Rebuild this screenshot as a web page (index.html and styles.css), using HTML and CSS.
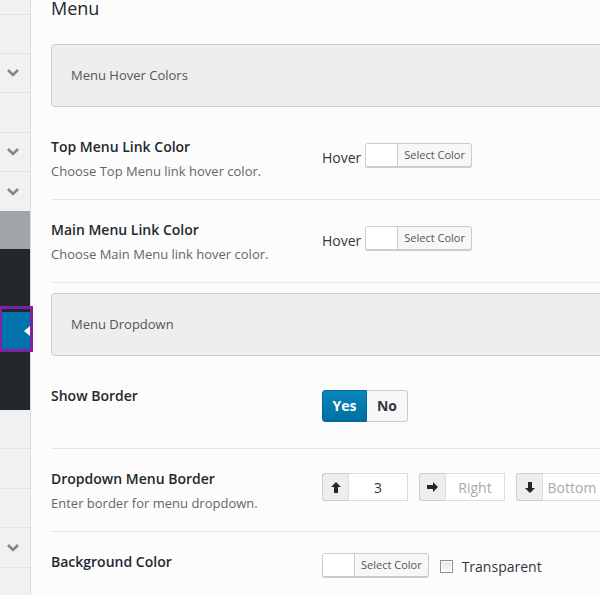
FILE: index.html
```html
<!DOCTYPE html>
<html lang="en">
<head>
  <meta charset="UTF-8" />
  <title>Theme Options - Menu</title>
  <link rel="stylesheet" href="styles.css">
</head>
<body>
  <div class="wrap">

    <!-- options sidebar (scrolled, only the edge shows) -->
    <aside class="sidebar">
      <div class="nav-item nav-first"></div>
      <div class="nav-item"></div>
      <div class="nav-item">
        <svg class="chev" width="12" height="8" viewBox="0 0 12 8"><polyline points="1,1 6,6 11,1" /></svg>
      </div>
      <div class="nav-item tall"></div>
      <div class="nav-item">
        <svg class="chev" width="12" height="8" viewBox="0 0 12 8"><polyline points="1,1 6,6 11,1" /></svg>
      </div>
      <div class="nav-item last">
        <svg class="chev" width="12" height="8" viewBox="0 0 12 8"><polyline points="1,1 6,6 11,1" /></svg>
      </div>

      <div class="nav-parent"></div>
      <div class="nav-sub">
        <div class="nav-active"><span class="nav-arrow"></span></div>
      </div>

      <div class="nav-item"></div>
      <div class="nav-item tall"></div>
      <div class="nav-item"></div>
      <div class="nav-item tall">
        <svg class="chev" width="12" height="8" viewBox="0 0 12 8"><polyline points="1,1 6,6 11,1" /></svg>
      </div>
      <div class="nav-item"></div>
    </aside>

    <!-- main panel -->
    <main class="panel">
      <h2 class="panel-title">Menu</h2>

      <div class="section-head">Menu Hover Colors</div>

      <div class="field-row">
        <div class="field-label">
          <h4>Top Menu Link Color</h4>
          <p>Choose Top Menu link hover color.</p>
        </div>
        <div class="field-control ctl-hover">
          <span class="hover-label">Hover</span>
          <span class="color-btn"><span class="swatch"></span><span class="color-text">Select Color</span></span>
        </div>
      </div>

      <div class="field-row">
        <div class="field-label">
          <h4>Main Menu Link Color</h4>
          <p>Choose Main Menu link hover color.</p>
        </div>
        <div class="field-control ctl-hover">
          <span class="hover-label">Hover</span>
          <span class="color-btn"><span class="swatch"></span><span class="color-text">Select Color</span></span>
        </div>
      </div>

      <div class="section-head">Menu Dropdown</div>

      <div class="field-row">
        <div class="field-label">
          <h4>Show Border</h4>
        </div>
        <div class="field-control">
          <div class="toggle">
            <span class="toggle-yes">Yes</span>
            <span class="toggle-no">No</span>
          </div>
        </div>
      </div>

      <div class="field-row">
        <div class="field-label">
          <h4>Dropdown Menu Border</h4>
          <p>Enter border for menu dropdown.</p>
        </div>
        <div class="field-control dims">
          <div class="dim-group">
            <span class="dim-addon">
              <svg width="10" height="11" viewBox="0 0 10 11"><path d="M5 0 L10 5 H7 V11 H3 V5 H0 Z" /></svg>
            </span>
            <input class="dim-input" type="text" value="3">
          </div>
          <div class="dim-group">
            <span class="dim-addon">
              <svg width="11" height="10" viewBox="0 0 11 10"><path d="M11 5 L6 0 V3 H0 V7 H6 V10 Z" /></svg>
            </span>
            <input class="dim-input" type="text" placeholder="Right">
          </div>
          <div class="dim-group">
            <span class="dim-addon">
              <svg width="10" height="11" viewBox="0 0 10 11"><path d="M5 11 L10 6 H7 V0 H3 V6 H0 Z" /></svg>
            </span>
            <input class="dim-input" type="text" placeholder="Bottom">
          </div>
        </div>
      </div>

      <div class="field-row">
        <div class="field-label">
          <h4>Background Color</h4>
        </div>
        <div class="field-control ctl-bg">
          <span class="color-btn"><span class="swatch"></span><span class="color-text">Select Color</span></span>
          <input class="check" type="checkbox">
          <span class="check-label">Transparent</span>
        </div>
      </div>
    </main>

  </div>
</body>
</html>
```

FILE: styles.css
```css
html,
body {
  margin: 0;
  width: 600px;
  height: 595px;
  overflow: hidden;
}

body {
  font-family: "Open Sans", "Noto Sans", Arial, sans-serif;
  background-color: #fcfcfc;
  color: #23282d;
}

.wrap {
  display: flex;
  min-height: 595px;
}


/* sidebar */
.sidebar {
  width: 30px;
  flex: none;
  background-color: #f1f1f1;
  border-right: 1px solid #dcdcdc;
  display: flex;
  flex-direction: column;
}

.nav-item {
  height: 39px;
  box-sizing: border-box;
  border-bottom: 1px solid #e2e2e2;
  display: flex;
  align-items: center;
  justify-content: center;
  flex: none;
}

.nav-item.nav-first {
  height: 15px;
}

.nav-item.tall {
  height: 40px;
}

.nav-item.last {
  border-bottom: none;
}

.chev {
  margin-left: -4px;
}

.chev polyline {
  fill: none;
  stroke: #82878c;
  stroke-width: 2.6;
}

.nav-parent {
  height: 38px;
  background-color: #a0a5aa;
  flex: none;
}

.nav-sub {
  height: 161px;
  background-color: #23282d;
  padding-top: 57px;
  box-sizing: border-box;
  flex: none;
}

.nav-active {
  position: relative;
  z-index: 2;
  width: 34px;
  height: 46px;
  margin-left: -1px;
  box-sizing: border-box;
  border: 3px solid #80239f;
  background-color: #0073aa;
  box-shadow: inset 0 3px 0 #23282d;
  display: flex;
  align-items: center;
  justify-content: flex-end;
}

.nav-arrow {
  width: 0;
  height: 0;
  margin-top: 3px;
  border-top: 5px solid transparent;
  border-bottom: 5px solid transparent;
  border-right: 6px solid #fff;
}


/* main panel */
.panel {
  flex: none;
  width: 640px;
  padding-left: 20px;
}

.panel-title {
  margin: 0 0 28px;
  font-size: 18px;
  line-height: 16px;
  font-weight: 400;
  color: #23282d;
}

.section-head {
  height: 63px;
  box-sizing: border-box;
  margin: 10px 0;
  padding: 0 19px;
  border: 1px solid #ccc;
  border-radius: 4px;
  background-color: #eee;
  font-size: 13px;
  line-height: 61px;
  color: #555;
}

.field-row {
  display: grid;
  grid-template-columns: 271px 1fr;
  align-items: start;
  height: 83px;
  box-sizing: border-box;
  border-bottom: 1px solid #e7e7e7;
  padding-top: 21px;
}

.field-label h4 {
  margin: 0;
  font-size: 14px;
  line-height: 18px;
  font-weight: 600;
  color: #23282d;
}

.field-label p {
  margin: 6px 0 0;
  font-size: 13px;
  line-height: 18px;
  color: #666;
}

.field-control {
  padding-top: 3px;
}


/* color picker */
.ctl-hover {
  display: flex;
  align-items: flex-start;
  padding-top: 5px;
}

.hover-label {
  font-size: 14px;
  line-height: 19px;
  margin: 5px 4px 0 0;
  color: #32373c;
}

.color-btn {
  display: inline-flex;
  height: 24px;
  box-sizing: border-box;
  border: 1px solid #ccc;
  border-radius: 3px;
  background-color: #f7f7f7;
  box-shadow: 0 1px 0 #ccc;
  overflow: hidden;
}

.swatch {
  width: 31px;
  background-color: #fff;
  border-right: 1px solid #ccc;
}

.color-text {
  padding: 0 6px;
  font-size: 11px;
  line-height: 22px;
  color: #555;
}


/* yes / no */
.toggle {
  display: inline-flex;
}

.toggle span {
  height: 32px;
  box-sizing: border-box;
  font-size: 14px;
  font-weight: 700;
  line-height: 30px;
  text-align: center;
}

.toggle-yes {
  width: 45px;
  color: #fff;
  background: linear-gradient(#0a86bd, #006fa2);
  border: 1px solid #006799;
  border-radius: 3px 0 0 3px;
}

.toggle-no {
  width: 41px;
  color: #32373c;
  background-color: #f7f7f7;
  border: 1px solid #ccc;
  border-left: none;
  border-radius: 0 3px 3px 0;
}


/* dimensions */
.dims {
  display: flex;
  align-items: flex-start;
  gap: 11px;
}

.dim-group {
  display: flex;
  height: 28px;
}

.dim-addon {
  width: 26px;
  box-sizing: border-box;
  background-color: #eee;
  border: 1px solid #ccc;
  border-right: none;
  border-radius: 3px 0 0 3px;
  display: flex;
  align-items: center;
  justify-content: center;
}

.dim-addon svg {
  fill: #23282d;
}

.dim-input {
  width: 60px;
  height: 28px;
  box-sizing: border-box;
  margin: 0;
  padding: 0 4px;
  border: 1px solid #ddd;
  border-radius: 0;
  background-color: #fff;
  font-family: "Open Sans", "Noto Sans", Arial, sans-serif;
  font-size: 14px;
  color: #32373c;
  text-align: center;
  outline: none;
}

.dim-input::placeholder {
  color: #a9a9a9;
}


/* background color */
.ctl-bg {
  display: flex;
  align-items: center;
  padding-top: 0;
}

.check {
  appearance: none;
  width: 13px;
  height: 13px;
  margin: 2px 9px 0 11px;
  box-sizing: border-box;
  border: 1px solid #8c8f94;
  background: linear-gradient(#e6e6e6, #fafafa);
  box-shadow: inset 0 0 0 1px #fff;
}

.check-label {
  font-size: 14px;
  line-height: 19px;
  margin-top: 3px;
  color: #32373c;
}
```
